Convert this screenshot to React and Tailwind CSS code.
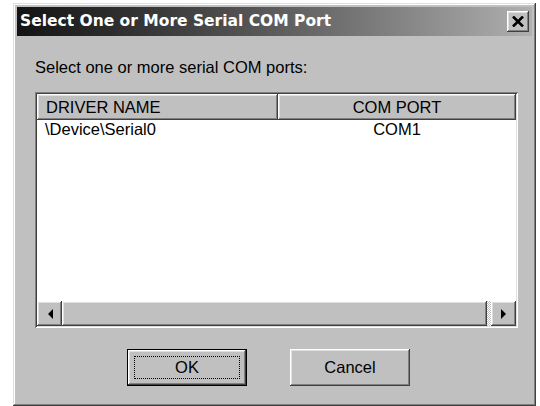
import React from 'react';

// classic 3D edges
const raised =
	'shadow-[inset_-1px_-1px_#404040,inset_1px_1px_#ffffff,inset_-2px_-2px_#808080,inset_2px_2px_#dfdfdf]';
const sunken =
	'shadow-[inset_1px_1px_#808080,inset_-1px_-1px_#ffffff,inset_2px_2px_#404040,inset_-2px_-2px_#dfdfdf]';
const sans = "font-['Liberation_Sans',Arial,sans-serif]";

function Arrow({ dir }) {
	return (
		<div className={`w-[25px] h-full bg-[#c0c0c0] ${raised} flex items-center justify-center`}>
			<svg width="6" height="10" viewBox="0 0 6 10">
				{dir === 'left' ? (
					<polygon points="6,0 6,10 1,5" fill="#000" />
				) : (
					<polygon points="0,0 0,10 5,5" fill="#000" />
				)}
			</svg>
		</div>
	);
}

function Button({ children, primary }) {
	if (primary) {
		return (
			<div className="w-[120px] h-[37px] border border-black">
				<div className={`w-full h-full bg-[#c0c0c0] ${raised} p-[6px]`}>
					<div
						className={`w-full h-full border border-dotted border-black flex items-center justify-center text-[16.5px] text-black ${sans}`}
					>
						{children}
					</div>
				</div>
			</div>
		);
	}
	return (
		<div
			className={`w-[120px] h-[37px] bg-[#c0c0c0] ${raised} flex items-center justify-center text-[16.5px] text-black ${sans}`}
		>
			{children}
		</div>
	);
}

export default function App() {
	return (
		<div className="w-[540px] h-[406px] bg-white overflow-hidden pl-[13px] pt-[3px]">
			<div
				className={`w-[523px] h-[403px] bg-[#c0c0c0] p-[4px] flex flex-col shadow-[inset_-1px_-1px_#404040,inset_1px_1px_#dfdfdf,inset_-2px_-2px_#808080,inset_2px_2px_#ffffff]`}
			>
				{/* title bar */}
				<div className="h-[29px] shrink-0 flex items-center justify-between bg-linear-to-r from-[#141414] to-[#b0b0b0] pl-[3px] pr-[3px]">
					<span className="text-white font-bold text-[15.5px] font-['DejaVu_Sans',Verdana,sans-serif] leading-none">
						Select One or More Serial COM Port
					</span>
					<div className={`w-[22px] h-[21px] bg-[#c0c0c0] ${raised} flex items-center justify-center`}>
						<svg width="12" height="11" viewBox="0 0 12 11">
							<path d="M1 0.5 L11 10.5 M11 0.5 L1 10.5" stroke="#000" strokeWidth="2.6" />
						</svg>
					</div>
				</div>

				<div className="flex flex-col pl-[18px]">
					<div className={`mt-[22px] leading-[19px] text-[16.5px] text-black ${sans}`}>
						Select one or more serial COM ports:
					</div>

					{/* list view */}
					<div className={`mt-[15px] w-[483px] h-[236px] bg-white ${sunken} p-[2px] flex flex-col`}>
						<div className={`h-[26px] shrink-0 flex text-[16.5px] text-black ${sans}`}>
							<div className={`w-[241px] h-full bg-[#c0c0c0] ${raised} flex items-center pl-[9px]`}>
								DRIVER NAME
							</div>
							<div className={`flex-1 h-full bg-[#c0c0c0] ${raised} flex items-center justify-center`}>
								COM PORT
							</div>
						</div>
						<div className={`flex-1 text-[16.5px] text-black ${sans}`}>
							<div className="flex h-[19px] items-center">
								<div className="w-[241px] pl-[8px]">\Device\Serial0</div>
								<div className="flex-1 text-center">COM1</div>
							</div>
						</div>
						{/* horizontal scroll bar */}
						<div className="h-[25px] shrink-0 flex">
							<Arrow dir="left" />
							<div className={`w-[425px] h-full bg-[#c0c0c0] ${raised}`} />
							<div className="flex-1 h-full bg-[repeating-conic-gradient(#ffffff_0_25%,#c0c0c0_0_50%)] bg-size-[2px_2px]" />
							<Arrow dir="right" />
						</div>
					</div>

					{/* buttons */}
					<div className="mt-[21px] flex gap-[43px] pl-[92px]">
						<Button primary>OK</Button>
						<Button>Cancel</Button>
					</div>
				</div>
			</div>
		</div>
	);
}
